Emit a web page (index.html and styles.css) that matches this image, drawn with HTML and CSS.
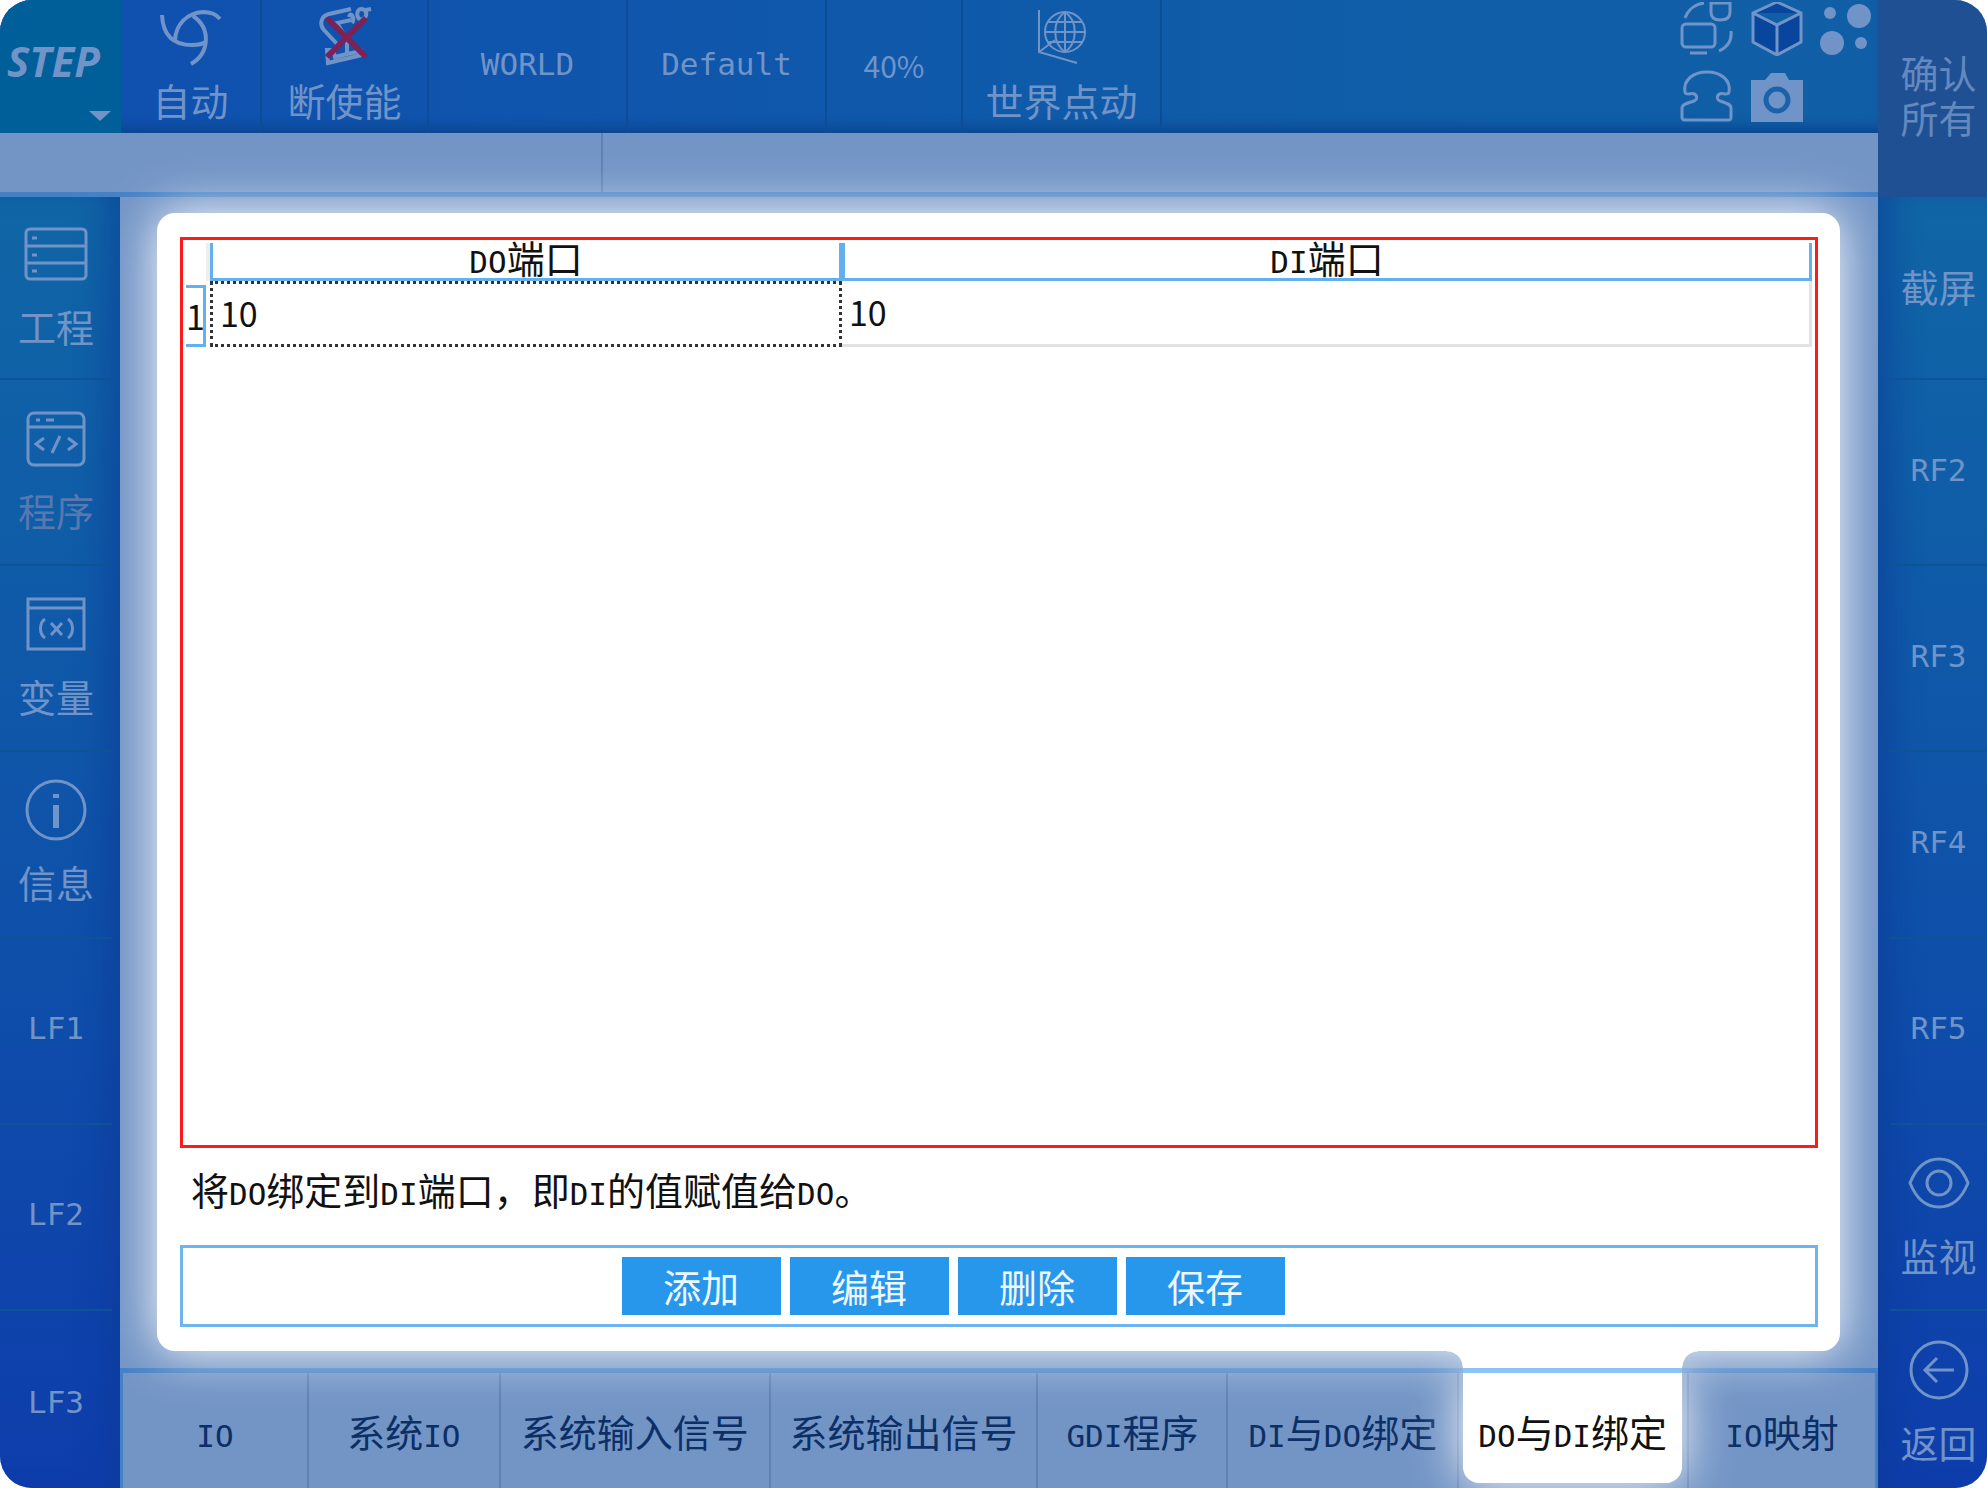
FILE: index.html
```html
<!DOCTYPE html>
<html lang="zh-CN">
<head>
<meta charset="utf-8">
<meta name="viewport" content="width=device-width, initial-scale=1">
<title>DO与DI绑定</title>
<link rel="stylesheet" href="styles.css">
</head>
<body>
<div class="app">
  <header class="topbar">
    <button class="logo" type="button"><span class="logo-text">STEP</span><span class="caret"></span></button>
    <button class="status-cell mode" type="button">
      <svg class="status-icon" viewBox="0 0 64 60"><path d="M3 9C4 32 17 39 33 39C40 39 44 38 46 36M16 34C17 18 28 7 44 6C52 6 58 9 61 13M34 10C52 22 51 47 32 58"/></svg>
      <span>自动</span>
    </button>
    <button class="status-cell servo" type="button">
      <svg class="status-icon" viewBox="0 0 64 60"><path d="M38 3L16 8C8 10 6 18 11 24L25 39M38 14L24 17L34 33V48M14 44L15 57L49 49L48 45L34 48L22 51L20 44ZM36 11C38 4 42 13 39 17M49 3C42 2 43 16 50 13C55 10 54 4 49 3M53 4L58 3"/><path class="cross" d="M14 12L53 51M53 12L14 51"/></svg>
      <span>断使能</span>
    </button>
    <button class="status-cell wide" type="button"><span class="latin">WORLD</span></button>
    <button class="status-cell wide" type="button"><span class="latin">Default</span></button>
    <button class="status-cell speed" type="button"><span class="number">40%</span></button>
    <button class="status-cell jog" type="button">
      <svg class="status-icon" viewBox="0 0 64 60"><path class="thin" d="M9 4V46L47 57M9 46L25 34"/><circle class="thin" cx="35" cy="26" r="20"/><path class="thin" d="M35 6V46M15 26H55M18 16H52M18 36H52M35 6C22 15 22 37 35 46M35 6C48 15 48 37 35 46"/></svg>
      <span>世界点动</span>
    </button>
    <div class="tools">
      <button type="button" aria-label="切换设备"><svg viewBox="0 0 54 54"><rect x="2" y="22" width="33" height="23" rx="4"/><path d="M10 51H27M5 16C8 8 15 2 24 1M51 29C52 38 48 45 39 49M31 1H50V10C50 16 46 18 40 18C34 18 31 15 31 10Z"/></svg></button>
      <button type="button" aria-label="三维视图"><svg viewBox="0 0 54 54"><path class="cube" d="M27 0L51 11V40L27 53L3 40V11ZM3 11L27 23L51 11M27 23V53"/></svg></button>
      <button type="button" aria-label="更多"><svg class="solid" viewBox="0 0 54 54"><circle cx="10" cy="11" r="6"/><circle cx="39" cy="14" r="12"/><circle cx="12" cy="41" r="12"/><circle cx="41" cy="41" r="6"/></svg></button>
      <button type="button" aria-label="急停"><svg viewBox="0 0 54 54"><path d="M5 22C3 10 13 2 27 2C41 2 51 10 49 22C49 24 47 24 45 24C37 22 35 29 40 31C46 33 51 34 51 38V47C51 50 50 50 48 50H6C3 50 2 50 2 47V38C2 34 8 33 14 31C19 29 17 22 9 24C7 24 5 24 5 22Z"/></svg></button>
      <button type="button" aria-label="拍照"><svg class="solid" viewBox="0 0 54 54"><path d="M1 10H15L21 3H35L39 10H53V52H1Z"/><circle class="lens" cx="27" cy="30" r="11"/></svg></button>
    </div>
  </header>
  <button class="confirm" type="button">确认<br>所有</button>

  <div class="message"><span class="message-code"></span><span class="message-text"></span></div>

  <nav class="side left" aria-label="左侧功能键">
    <button type="button">
      <svg viewBox="0 0 64 64"><rect x="2" y="7" width="60" height="50" rx="4"/><path d="M2 24H62M2 41H62M8 16H13M8 33H13M8 49H13"/></svg>
      <span>工程</span>
    </button>
    <button type="button" class="dim">
      <svg viewBox="0 0 64 64"><rect x="4" y="7" width="56" height="52" rx="6"/><path d="M4 21H60M12 14H16M22 14H30M20 32L12 38L20 44M44 32L52 38L44 44M36 30L28 47"/></svg>
      <span>程序</span>
    </button>
    <button type="button">
      <svg viewBox="0 0 64 64"><path d="M4 7H60V57H4ZM4 16H60M21 27C15 31 15 42 21 46M44 27C50 31 50 42 44 46M27 31L38 43M38 31L27 43"/></svg>
      <span>变量</span>
    </button>
    <button type="button">
      <svg viewBox="0 0 64 64"><circle cx="32" cy="32" r="29"/><path class="heavy" d="M32 27V50M32 16V20"/></svg>
      <span>信息</span>
    </button>
    <button type="button"><span class="latin">LF1</span></button>
    <button type="button"><span class="latin">LF2</span></button>
    <button type="button"><span class="latin">LF3</span></button>
  </nav>

  <main class="workspace">
    <section class="panel">
      <div class="grid-box">
        <table class="bindings">
          <colgroup><col class="col-index"><col class="col-do"><col class="col-di"></colgroup>
          <thead>
            <tr><td class="corner"></td><th scope="col"><span class="latin">DO</span>端口</th><th scope="col"><span class="latin">DI</span>端口</th></tr>
          </thead>
          <tbody>
            <tr><th scope="row"><span class="row-index">1</span></th><td class="focused">10</td><td>10</td></tr>
          </tbody>
        </table>
      </div>
      <p class="note">将<span class="latin">DO</span>绑定到<span class="latin">DI</span>端口，即<span class="latin">DI</span>的值赋值给<span class="latin">DO</span>。</p>
      <div class="actions">
        <button type="button">添加</button>
        <button type="button">编辑</button>
        <button type="button">删除</button>
        <button type="button">保存</button>
      </div>
    </section>
  </main>

  <nav class="tabs" aria-label="页面">
    <button type="button" class="tab"><span class="latin">IO</span></button>
    <button type="button" class="tab">系统<span class="latin">IO</span></button>
    <button type="button" class="tab">系统输入信号</button>
    <button type="button" class="tab">系统输出信号</button>
    <button type="button" class="tab"><span class="latin">GDI</span>程序</button>
    <button type="button" class="tab"><span class="latin">DI</span>与<span class="latin">DO</span>绑定</button>
    <div class="tab-slot">
      <button type="button" class="tab-active" aria-current="page"><span class="latin">DO</span>与<span class="latin">DI</span>绑定<i class="fillet start"></i><i class="fillet end"></i></button>
    </div>
    <button type="button" class="tab"><span class="latin">IO</span>映射</button>
  </nav>

  <nav class="side right" aria-label="右侧功能键">
    <button type="button"><span>截屏</span></button>
    <button type="button"><span class="latin">RF2</span></button>
    <button type="button"><span class="latin">RF3</span></button>
    <button type="button"><span class="latin">RF4</span></button>
    <button type="button"><span class="latin">RF5</span></button>
    <button type="button">
      <svg viewBox="0 0 64 64"><path d="M3 32C9 17 19 8 32 8C45 8 55 17 61 32C55 47 45 56 32 56C19 56 9 47 3 32Z"/><circle cx="32" cy="32" r="12"/></svg>
      <span>监视</span>
    </button>
    <button type="button">
      <svg viewBox="0 0 64 64"><circle cx="32" cy="32" r="28"/><path d="M47 32H19M30 20L18 32L30 44"/></svg>
      <span>返回</span>
    </button>
  </nav>
</div>
</body>
</html>
```
FILE: styles.css
```css
:root {
  --ink: #7094c8;
  --pale: #7395c6;
  --line: #4681c6;
  --rule: #0f5397;
}

* {
  box-sizing: border-box;
}

body {
  margin: 0;
  background: #fff;
  font-family: "Noto Sans CJK SC", sans-serif;
  font-size: 38px;
  line-height: 48px;
}

button {
  margin: 0;
  padding: 0;
  border: 0;
  background: none;
  color: inherit;
  font: inherit;
  cursor: pointer;
}

svg {
  display: block;
  fill: none;
  stroke: currentColor;
  stroke-width: 3;
}

.latin {
  font-family: "DejaVu Sans Mono", monospace;
  font-size: 31px;
  line-height: 1;
}

.app {
  display: grid;
  grid-template-columns: 120px minmax(0, 1fr) 109px;
  grid-template-rows: 133px 64px minmax(0, 1fr) 120px;
  grid-template-areas:
    "top top confirm"
    "message message confirm"
    "left work right"
    "left tabs right";
  min-height: 100vh;
  overflow: hidden;
  border-radius: 32px;
  background: var(--pale);
}

/* Top bar */

.topbar {
  grid-area: top;
  display: flex;
  background: linear-gradient(90deg, #104fb0, #0f5ba9 60%, #105fa6);
  box-shadow: inset 0 -12px 12px -6px #0b4790;
  color: var(--ink);
}

.logo {
  display: flex;
  flex: 0 0 121px;
  flex-direction: column;
  justify-content: flex-end;
  padding: 0 10px 12px 7px;
  background: #005f98;
}

.logo-text {
  font: italic 700 42px/60px "Open Sans", sans-serif;
  text-align: left;
}

.caret {
  align-self: flex-end;
  margin-top: 20px;
  border: solid transparent;
  border-width: 10px 11px 0;
  border-top-color: currentColor;
}

.status-cell {
  display: flex;
  flex-direction: column;
  align-items: center;
  justify-content: center;
  padding-bottom: 4px;
  border-right: 2px solid #0d4d95;
}

.status-icon {
  width: 64px;
  height: 60px;
  margin-bottom: 10px;
  stroke-width: 4;
}

.status-icon .thin {
  stroke-width: 2;
}

.status-icon .cross {
  stroke: #7c2257;
  stroke-width: 6;
}

.mode {
  flex: 0 0 141px;
}

.servo {
  flex: 0 0 167px;
}

.wide {
  flex: 0 0 199px;
}

.speed {
  flex: 0 0 136px;
}

.number {
  font-size: 30px;
}

.jog {
  flex: 0 0 199px;
}

.tools {
  display: grid;
  grid-template-columns: repeat(3, 54px);
  grid-auto-rows: 54px;
  gap: 14px 16px;
  margin-left: auto;
  padding: 2px 4px 0 0;
}

.tools .solid {
  fill: currentColor;
  stroke: none;
}

.tools .cube {
  fill: #08459c;
}

.tools .lens {
  stroke: #1c62a9;
  stroke-width: 5;
}

.confirm {
  grid-area: confirm;
  z-index: 2;
  padding: 0 0 10px 12px;
  background: #1f5093;
  color: #6389bf;
  line-height: 45px;
}

/* Message strip */

.message {
  grid-area: message;
  display: flex;
  border-bottom: 5px solid var(--line);
}

.message-code {
  flex: 0 0 603px;
  border-right: 2px solid #5f80b3;
}

/* Function keys */

.side {
  display: grid;
  grid-template-rows: 183fr repeat(5, 186fr) 177fr;
  z-index: 2;
  background: linear-gradient(#1066a6, #0f55a9 45%, #0e3dac);
  color: var(--ink);
}

.left {
  grid-area: left;
  padding-right: 8px;
  box-shadow: inset -28px 0 28px -12px rgba(12, 58, 150, 0.5);
}

.right {
  grid-area: right;
  padding-left: 12px;
  box-shadow: inset 28px 0 28px -12px rgba(12, 58, 150, 0.5);
}

.side button {
  display: flex;
  flex-direction: column;
  align-items: center;
  justify-content: center;
  gap: 16px;
  padding-bottom: 4px;
  border-bottom: 2px solid var(--rule);
}

.side button:last-child {
  border-bottom: 0;
  padding: 6px 0 0;
}

.side svg {
  width: 64px;
  height: 64px;
}

.side .heavy {
  stroke-width: 6;
}

.dim span {
  color: #5878b0;
}

/* Workspace */

.workspace {
  grid-area: work;
  display: flex;
  padding: 16px 38px 17px 37px;
}

.panel {
  position: relative;
  z-index: 1;
  display: flex;
  flex: 1;
  flex-direction: column;
  padding: 24px 22px 24px 23px;
  border-radius: 18px;
  background: #fff;
  box-shadow: 0 0 50px #fff;
  color: #111;
}

.grid-box {
  flex: 1;
  padding: 3px 3px 0;
  border: 3px solid #ff1a1a;
}

.bindings {
  width: 100%;
  border-spacing: 0;
  table-layout: fixed;
}

.bindings th,
.bindings td {
  padding: 0;
  font-weight: 400;
}

.col-index {
  width: 24px;
}

.col-do {
  width: 632px;
}

.bindings .corner {
  border-right: 4px solid #eee;
}

.bindings thead th {
  height: 35px;
  border: solid #63b0f1;
  border-width: 0 3px 3px;
  line-height: 28px;
}

.bindings tbody th {
  padding: 4px 4px 0 0;
}

.row-index {
  display: block;
  border: solid #63b0f1;
  border-width: 3px 3px 3px 0;
  font-size: 34px;
  line-height: 56px;
}

.bindings tbody td {
  padding: 0 7px 2px;
  border: solid #e2e2e2;
  border-width: 0 3px 3px 0;
  font-size: 34px;
}

.bindings tbody .focused {
  border: 3px dotted #333;
}

.note {
  margin: 0;
  padding: 17px 11px 32px;
}

.actions {
  display: flex;
  justify-content: center;
  gap: 9px;
  padding: 9px 92px 9px 0;
  border: 3px solid #6db4f0;
}

.actions button {
  width: 159px;
  height: 58px;
  background: #2797ec;
  color: #eef6fd;
}

/* Page tabs */

.tabs {
  grid-area: tabs;
  display: grid;
  grid-template-columns: 186fr 192fr 270fr 268fr 190fr 231fr 230fr 186fr;
  border: solid var(--line);
  border-width: 5px 3px 0;
  color: #0c2f66;
}

.tab,
.tab-slot {
  min-width: 0;
  border-right: 2px solid #5f80b3;
  white-space: nowrap;
}

.tab:last-child {
  border-right: 0;
}

.tab-slot {
  display: flex;
  padding: 0 5px 5px 4px;
}

.tab-active {
  position: relative;
  z-index: 2;
  flex: 1;
  padding-top: 5px;
  border-radius: 0 0 16px 16px;
  background: #fff;
  box-shadow: 0 0 50px #fff;
  color: #111;
}

/* Neck that joins the active tab to the panel above it */
.tab-active::before {
  content: "";
  position: absolute;
  inset: -22px 0 auto;
  height: 22px;
  background: linear-gradient(#fff 17px, #8cc4f5 17px);
}

.fillet {
  position: absolute;
  top: -22px;
  width: 16px;
  height: 16px;
}

.fillet.start {
  right: 100%;
  background: radial-gradient(circle at 0 100%, transparent 15px, #fff 16px);
}

.fillet.end {
  left: 100%;
  background: radial-gradient(circle at 100% 100%, transparent 15px, #fff 16px);
}
```
